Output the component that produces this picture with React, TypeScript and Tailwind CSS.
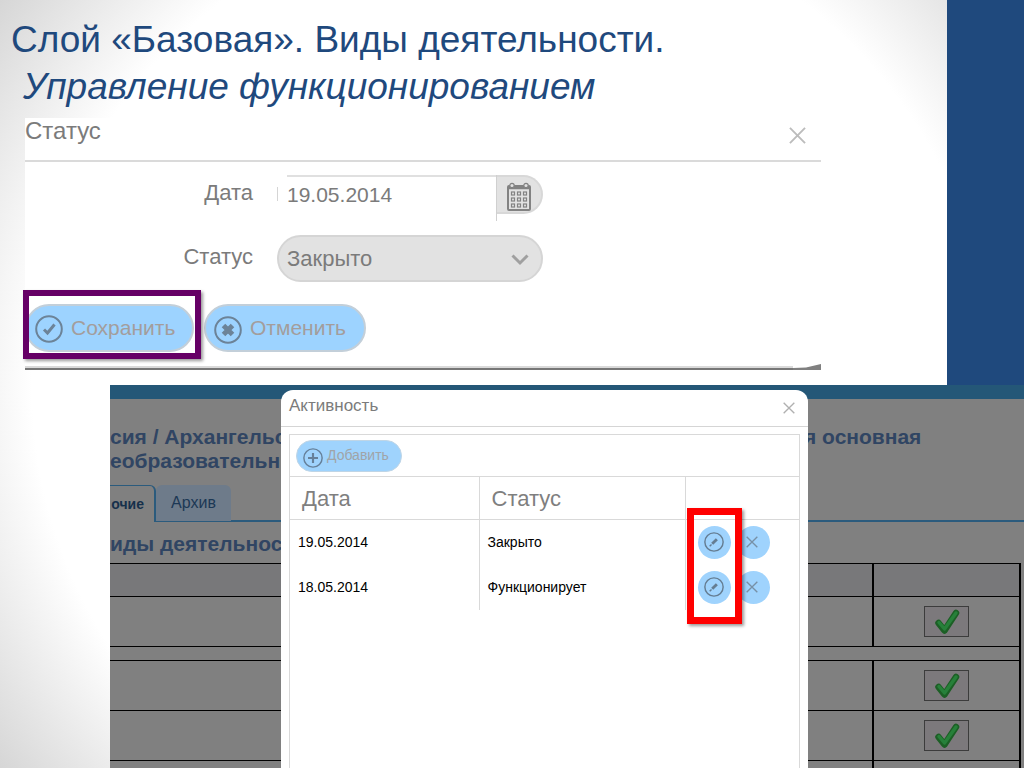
import { ReactNode } from "react";

type IconProps = { className?: string };

const rows = [
    { date: "19.05.2014", status: "Закрыто" },
    { date: "18.05.2014", status: "Функционирует" },
];

function CrossIcon({ className }: IconProps) {
    return (
        <svg viewBox="0 0 18 18" className={className} fill="none" stroke="currentColor" strokeWidth="2">
            <path d="M1 1 17 17M17 1 1 17" />
        </svg>
    );
}

function CircleIcon({ className, children }: IconProps & { children: ReactNode }) {
    return (
        <svg viewBox="0 0 28 28" className={className} fill="none" stroke="currentColor" strokeWidth="2">
            <circle cx="14" cy="14" r="12.8" />
            {children}
        </svg>
    );
}

function CalendarIcon() {
    return (
        <svg viewBox="0 0 26 30" className="h-[30px] w-[26px]" fill="none" stroke="#828282">
            <rect x="2" y="4" width="22" height="24" rx="1" strokeWidth="2" />
            <path d="M2 5.5H24" strokeWidth="3.5" />
            <circle cx="6" cy="3.5" r="2.2" fill="#e2e2e2" strokeWidth="1.2" />
            <circle cx="20" cy="3.5" r="2.2" fill="#e2e2e2" strokeWidth="1.2" />
            {[10.5, 16.5, 22.5].map((y) =>
                [6, 12, 18].map((x) => (
                    <rect key={`${x}-${y}`} x={x - 0.5} y={y - 0.5} width="3" height="3" strokeWidth="1.2" />
                ))
            )}
        </svg>
    );
}

function GreenCheck() {
    return (
        <button aria-label="Выбрано" className="mx-auto flex h-[31px] w-[45px] items-center justify-center border border-[#3c3c3c] bg-[#7c797c]">
            <svg viewBox="0 0 26 26" className="h-[26px] w-[26px]" fill="none" strokeLinecap="round" strokeLinejoin="round">
                <path d="M4.5 14 10.5 21.5 22 4" stroke="#1c5f25" strokeWidth="6.5" />
                <path d="M5 13.5 10.5 20 22 4" stroke="#27803a" strokeWidth="3.4" />
            </svg>
        </button>
    );
}

function StatusForm() {
    return (
        <section className="mt-2 mr-[126px] ml-[25px] bg-white text-[#7b7b7b]">
            <header className="flex h-[44px] items-start justify-between border-b-2 border-[#dadada] pr-[15px]">
                <h2 className="text-[24px] leading-[26px]">Статус</h2>
                <button aria-label="Закрыть" className="mt-[9px] text-[#bcbcbc]">
                    <CrossIcon className="size-[17px]" />
                </button>
            </header>

            <form className="pt-[13px]" onSubmit={(e) => e.preventDefault()}>
                <div className="flex h-[60px] items-start">
                    <label htmlFor="date" className="w-[228px] text-right text-[22px] leading-[36px]">Дата</label>
                    <div className="ml-[24px] flex w-[266px] items-start">
                        <span className="mt-3 h-[14px] w-[10px] border-l border-[#d5d5d5]" />
                        <input
                            id="date"
                            defaultValue="19.05.2014"
                            className="h-[39px] min-w-0 flex-1 border-t-2 border-[#e0e0e0] bg-white pb-0.5 text-[21px] outline-none"
                        />
                        <div className="h-[46px] border-l border-[#d0d0d0]">
                            <button type="button" aria-label="Календарь" className="flex h-[39px] w-[46px] items-end justify-center rounded-r-full border-2 border-l-0 border-[#d8d8d8] bg-[#e2e2e2]">
                                <CalendarIcon />
                            </button>
                        </div>
                    </div>
                </div>

                <div className="flex h-[47px] items-start">
                    <label htmlFor="status" className="w-[228px] text-right text-[22px] leading-[44px]">Статус</label>
                    <div className="relative ml-[24px] w-[266px]">
                        <select id="status" className="h-[47px] w-full appearance-none rounded-full border-2 border-[#d5d5d5] bg-[#e2e2e2] px-2 text-[22px] outline-none">
                            <option>Закрыто</option>
                        </select>
                        <svg viewBox="0 0 18 12" className="pointer-events-none absolute top-[19px] right-[14px] h-3 w-[18px]" fill="none" stroke="#a0a0a0" strokeWidth="3">
                            <path d="M1.5 1.5 9 9 16.5 1.5" />
                        </svg>
                    </div>
                </div>

                <div className="mt-[22px] flex gap-[10px] text-[21px] text-[#a39d9c]">
                    <div className="relative">
                        <button className="flex h-[48px] w-[169px] items-center rounded-full border-2 border-[#c3cfd9] bg-[#9dd3ff] pl-2">
                            <CircleIcon className="mt-0.5 mr-2 size-7 text-[#6c8398]">
                                <path d="M9 14.5 12.5 18 19.5 9.5" strokeWidth="3" />
                            </CircleIcon>
                            Сохранить
                        </button>
                        <div className="pointer-events-none absolute -top-[14px] -left-[2px] h-[69px] w-[178px] border-[6px] border-[#660066] shadow-[2px_2px_3px_rgba(0,0,0,0.4)]" />
                    </div>
                    <button className="flex h-[48px] w-[162px] items-center rounded-full border-2 border-[#c3cfd9] bg-[#9dd3ff] pl-2">
                        <CircleIcon className="mt-1 mr-2 size-7 text-[#6c8398]">
                            <path d="M9.5 9.5 18.5 18.5M18.5 9.5 9.5 18.5" strokeWidth="5" />
                        </CircleIcon>
                        Отменить
                    </button>
                </div>
            </form>

            <div className="mt-3 flex items-end">
                <div className="h-1 flex-1 border-t-2 border-b-2 border-t-[#dadada] border-b-[#777777]" />
                <svg viewBox="0 0 28 6" className="h-1.5 w-7">
                    <path d="M0 4 13 3.5 28 0V6H0Z" fill="#808080" />
                </svg>
            </div>
        </section>
    );
}

function ActivityDialog() {
    return (
        <div role="dialog" aria-labelledby="activity" className="absolute top-[5px] bottom-0 left-[171px] flex w-[527px] flex-col rounded-t-xl bg-white px-2">
            <header className="-mx-2 flex h-[37px] items-start justify-between border-b border-[#d5d5d5] pr-[13px] pl-2">
                <h2 id="activity" className="text-[17px] leading-[31px] text-[#7b7b7b]">Активность</h2>
                <button aria-label="Закрыть" className="mt-3 text-[#b0b0b0]">
                    <CrossIcon className="size-3" />
                </button>
            </header>

            <div className="mt-[7px] flex-1 border border-b-0 border-[#d9d9d9]">
                <div className="flex h-[41px] items-center px-1.5">
                    <button className="flex h-8 w-[106px] items-center gap-1 rounded-full border border-[#bfd5e6] bg-[#9fd3fd] pl-1.5 text-[14px] text-[#a0a4a8]">
                        <CircleIcon className="mt-1 size-5 text-[#66809a]">
                            <path d="M14 7V21M7 14H21" strokeWidth="3" />
                        </CircleIcon>
                        Добавить
                    </button>
                </div>
                <table className="w-full table-fixed border-collapse text-left">
                    <thead>
                        <tr className="h-[43px] border-y border-[#d9d9d9] text-[22px] text-[#7f7f7f]">
                            <th className="w-[189px] border-r border-[#d9d9d9] pl-3 font-normal">Дата</th>
                            <th className="w-[206px] border-r border-[#d9d9d9] pl-3 font-normal">Статус</th>
                            <th aria-label="Действия" />
                        </tr>
                    </thead>
                    <tbody>
                        {rows.map((row) => (
                            <tr key={row.date} className="h-[45px] text-[14px] text-black">
                                <td className="border-r border-[#d9d9d9] pl-2">{row.date}</td>
                                <td className="border-r border-[#d9d9d9] pl-2">{row.status}</td>
                                <td className="p-0">
                                    <div className="flex items-center gap-1.5 pl-3">
                                        <button aria-label="Изменить" className="flex size-[33px] items-center justify-center rounded-full bg-[#9fd3fd]">
                                            <CircleIcon className="size-5 text-[#657d92]">
                                                <path d="M11.5 16.5 18 10" strokeWidth="4" />
                                                <path d="M8 20 10.5 17.5" strokeWidth="2" />
                                            </CircleIcon>
                                        </button>
                                        <button aria-label="Удалить" className="flex size-[33px] items-center justify-center rounded-full bg-[#9fd3fd] pr-0.5 text-[#7790a6]">
                                            <CrossIcon className="size-3" />
                                        </button>
                                    </div>
                                </td>
                            </tr>
                        ))}
                    </tbody>
                </table>
            </div>

            <div className="pointer-events-none absolute top-[118px] left-[406px] h-[116px] w-[55px] border-[7px] border-[#ff0000] shadow-[2px_2px_3px_rgba(0,0,0,0.4)]" />
        </div>
    );
}

function CheckRow() {
    return (
        <tr className="h-[50px] border-y border-black">
            <td className="border-r-2 border-black" />
            <td className="border-r-2 border-black p-0"><GreenCheck /></td>
        </tr>
    );
}

function Journal() {
    return (
        <section className="relative ml-[110px] min-h-0 flex-1 overflow-hidden bg-[#808080] text-[#304563]">
            <div className="h-[14px] bg-[#245777]" />

            <h2 className="mt-[26px] flex text-[21px] leading-6 font-bold whitespace-nowrap">
                <span className="w-[171px] shrink-0">
                    сия / Архангельс<br />еобразовательн
                </span>
                <span className="ml-[523px]">я основная</span>
            </h2>

            <nav className="mt-3 flex h-[37px] items-stretch text-[16px]">
                <button className="flex w-[46px] items-center justify-end rounded-tr-md border-t border-r-2 border-[#2b5b7d] pr-2.5 text-[14px] font-bold text-[#16304b]">
                    очие
                </button>
                <button className="w-[75px] rounded-t-md border-b border-[#2b5b7d] bg-[#6e7b8a] text-[#1c3855]">Архив</button>
                <span className="flex-1 border-b-2 border-[#2b5b7d]" />
            </nav>

            <h3 className="mt-2 text-[21px] leading-7 font-bold">иды деятельност</h3>

            <table className="mt-[5px] w-[calc(100%-3px)] table-fixed border-collapse">
                <colgroup>
                    <col />
                    <col className="w-[147px]" />
                </colgroup>
                <tbody>
                    <tr className="h-[33px] border-y border-black bg-[#78787a]">
                        <td className="border-r-2 border-black" />
                        <td className="border-r-2 border-black" />
                    </tr>
                    <CheckRow />
                    <tr className="h-[14px]">
                        <td colSpan={2} className="border-r-2 border-black p-0" />
                    </tr>
                    <CheckRow />
                    <CheckRow />
                    <CheckRow />
                </tbody>
            </table>

            <ActivityDialog />
        </section>
    );
}

export default function App() {
    return (
        <main className="flex h-screen flex-col overflow-hidden bg-[radial-gradient(circle_at_center,#ffffff_75%,#d6d6d6_100%)] font-['Liberation_Sans',Arial,sans-serif]">
            <div className="flex h-[385px]">
                <div className="min-w-0 flex-1">
                    <h1 className="pt-4 pl-[11px] text-[37px] leading-[47px] whitespace-nowrap text-[#1f497d]">
                        Слой «Базовая». Виды деятельности.
                        <em className="block pl-3">Управление функционированием</em>
                    </h1>
                    <StatusForm />
                </div>
                <aside className="w-[77px] bg-[#1f497d]" />
            </div>
            <Journal />
        </main>
    );
}
